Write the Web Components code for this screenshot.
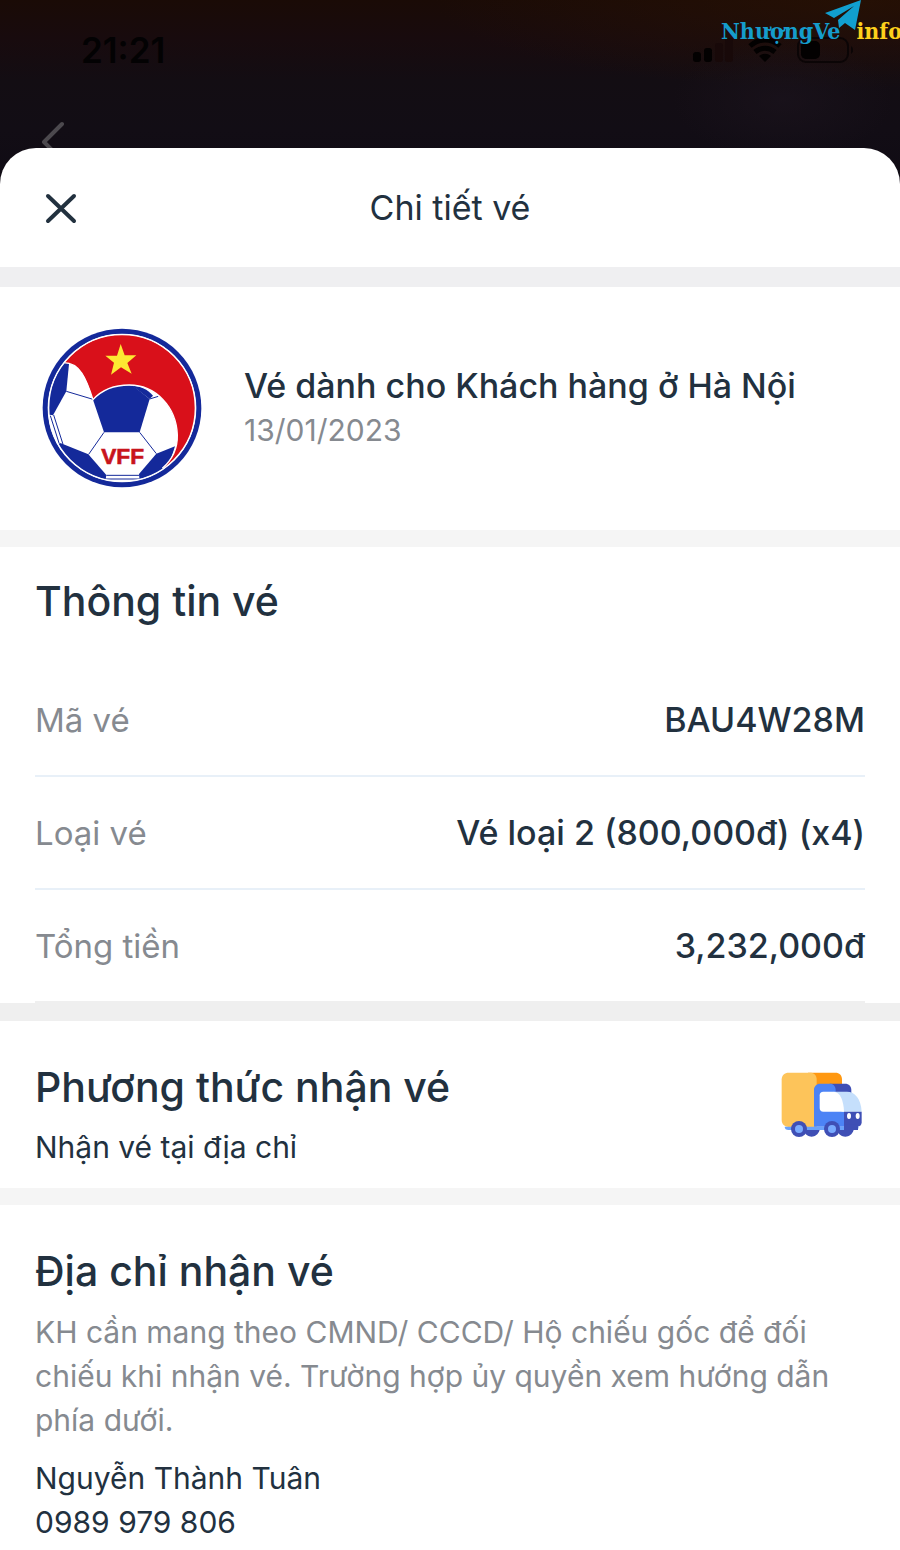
<!DOCTYPE html>
<html lang="vi">
<head>
<meta charset="utf-8">
<meta name="viewport" content="width=device-width, initial-scale=1">
<title>Chi tiết vé</title>
<style>
html {
  height: 100%;
}

body {
  margin: 0;
  height: 100%;
  font-family: Inter, Roboto, sans-serif;
  color: #22313f;
  background: #fff;
  --muted: #868a90;
  --gutter: 35px;
}
</style>
</head>
<body>
<ticket-screen>
  <status-bar slot="top" time="21:21"></status-bar>
  <site-brand slot="top"></site-brand>

  <sheet-header>Chi tiết vé</sheet-header>

  <event-card date="13/01/2023">Vé dành cho Khách hàng ở Hà Nội</event-card>

  <ticket-info heading="Thông tin vé"></ticket-info>

  <delivery-method heading="Phương thức nhận vé">Nhận vé tại địa chỉ</delivery-method>

  <delivery-address heading="Địa chỉ nhận vé">
    <span slot="note">KH cần mang theo CMND/ CCCD/ Hộ chiếu gốc để đối chiếu khi nhận vé. Trường hợp ủy quyền xem hướng dẫn phía dưới.</span>
    <span slot="name">Nguyễn Thành Tuân</span>
    <a slot="phone" href="tel:0989979806">0989 979 806</a>
  </delivery-address>
</ticket-screen>

<script>
const attach = (element, html) => {
  const template = document.createElement('template');
  template.innerHTML = html;
  element.attachShadow({ mode: "open" });
  element.shadowRoot.appendChild(template.content.cloneNode(true));
};


class TicketScreen extends HTMLElement {
  constructor() {
    super();

    attach(this, `
<style>
:host {
  display: flex;
  flex-direction: column;
  min-height: 100%;
  background:
    radial-gradient(ellipse 110px 60px at 87% 100px, rgba(28, 20, 30, 0.6), transparent),
    radial-gradient(ellipse 420px 90px at 95% 0, rgba(42, 18, 4, 0.7), transparent),
    linear-gradient(180deg, #1a0b06 0, #180b0e 40px, #130d13 80px, #120d15 130px, #0f0b14 200px);
}

.top {
  position: relative;
  height: 148px;
  overflow: hidden;
}

main {
  flex: 1;
  background: #fff;
  border-radius: 36px 36px 0 0;
}
</style>
<div class="top"><slot name="top"></slot></div>
<main><slot></slot></main>
`);
  }
}
window.customElements.define('ticket-screen', TicketScreen);


class StatusBar extends HTMLElement {
  constructor() {
    super();

    attach(this, `
<style>
:host {
  display: block;
}

.bar {
  display: flex;
  align-items: center;
  justify-content: space-between;
  padding: 30px 47px 0 81px;
  height: 40px;
}

time {
  font-size: 35px;
  line-height: 40px;
  font-weight: 600;
  color: #030203;
}

button {
  display: block;
  margin: 50px 0 0 36px;
  padding: 0;
  border: 0;
  background: none;
}

svg {
  display: block;
}
</style>
<div class="bar">
  <time></time>
  <svg width="160" height="30" viewBox="0 0 160 30" aria-hidden="true">
    <rect x="0" y="17" width="8" height="10" rx="3" fill="#030101"/>
    <rect x="11" y="13" width="8" height="14" rx="3" fill="#030101"/>
    <rect x="22" y="8" width="8" height="19" rx="3" fill="#180909"/>
    <rect x="32" y="3" width="8" height="24" rx="3" fill="#180909"/>
    <g fill="none" stroke="#030101" stroke-width="5">
      <path d="M57 11c9-8 21-8 30 0"/>
      <path d="M62 17c6-5 14-5 20 0"/>
    </g>
    <path d="M66 21c4-3 8-3 12 0l-6 6z" fill="#030101"/>
    <rect x="105" y="3" width="50" height="24" rx="8" fill="none" stroke="#0b0506" stroke-width="2"/>
    <rect x="108" y="6" width="19" height="18" rx="5" fill="#030101"/>
    <path d="M158 11c3 2 3 6 0 8z" fill="#0b0506"/>
  </svg>
</div>
<button type="button" aria-label="Quay lại">
  <svg width="36" height="36" viewBox="0 0 36 36" fill="none" stroke="#4c494e" stroke-width="4" stroke-linecap="round" stroke-linejoin="round">
    <path d="M26 4L8 22l18 18"/>
  </svg>
</button>
`);
  }

  connectedCallback() {
    this.shadowRoot.querySelector('time').textContent = this.getAttribute('time');
  }
}
window.customElements.define('status-bar', StatusBar);


class SiteBrand extends HTMLElement {
  constructor() {
    super();

    // Lies over the status bar and runs out at the right edge
    attach(this, `
<style>
:host {
  position: absolute;
  top: 0;
  right: -2px;
  display: flex;
  font-family: "DejaVu Serif Condensed", "DejaVu Serif", serif;
  font-weight: 700;
  font-size: 23px;
  line-height: 26px;
  padding-top: 18px;
}

.name {
  color: #159dcc;
  margin-right: 16px;
}

.tld {
  color: #fcd01c;
}

svg {
  position: absolute;
  top: 0;
  right: 41px;
}
</style>
<span class="name">NhượngVe</span>
<svg width="36" height="32" viewBox="0 0 36 32" aria-hidden="true">
  <path d="M36 0L0 13l9 5L29 6 13 20l1 8 6-5 10 7z" fill="#119fcf"/>
</svg>
<span class="tld">info</span>
`);
  }
}
window.customElements.define('site-brand', SiteBrand);


class SheetHeader extends HTMLElement {
  constructor() {
    super();

    attach(this, `
<style>
:host {
  display: grid;
  grid-template-columns: 50px 1fr 50px;
  align-items: center;
  height: 119px;
  padding: 0 36px;
  border-bottom: 20px solid #efeff1;
}

button {
  display: block;
  width: 50px;
  height: 50px;
  padding: 0;
  border: 0;
  background: none;
  color: inherit;
}

svg {
  display: block;
}

h1 {
  margin: 0;
  font-size: 34px;
  line-height: 44px;
  font-weight: 400;
  text-align: center;
}
</style>
<button type="button" aria-label="Đóng">
  <svg width="50" height="50" viewBox="0 0 50 50" fill="none" stroke="currentColor" stroke-width="4" stroke-linecap="round">
    <path d="M12 13l26 25M38 13L12 38"/>
  </svg>
</button>
<h1><slot></slot></h1>
`);
  }
}
window.customElements.define('sheet-header', SheetHeader);


class FederationLogo extends HTMLElement {
  constructor() {
    super();

    attach(this, `
<style>
:host {
  display: block;
}

svg {
  display: block;
  width: 160px;
  height: 160px;
}
</style>
<svg viewBox="37 39 480 480" role="img" aria-label="VFF">
  <defs>
    <clipPath id="disc"><circle cx="277" cy="279" r="220"/></clipPath>
  </defs>
  <circle cx="277" cy="279" r="238" fill="#14299a"/>
  <circle cx="277" cy="279" r="223" fill="#fff"/>
  <g clip-path="url(#disc)">
    <rect x="50" y="50" width="460" height="460" fill="#fff"/>
    <!-- ball panels -->
    <g fill="#14299a">
      <path d="M50 298V150l60-8 8 5-8 82-40 72z"/>
      <path d="M190 254c30-34 75-50 120-42l50 40-30 100H223z"/>
      <path d="M92 384l84 34 54 62-4 26-60-10-90-80z"/>
      <path d="M380 416l56-22-16 50-30 40-60 15-2-22z"/>
      <path d="M308 212c24 1 46 10 62 30l-10 10z"/>
    </g>
    <g fill="none" stroke="#14299a" stroke-width="3">
      <path d="M110 229l80 24M72 300l28 88M62 302l28 88M223 352l-46 66M330 352l50 64M360 252l26-8"/>
      <path d="M230 481h98M228 492h102"/>
    </g>
    <!-- flag -->
    <path d="M100 143L120 40h400v420H398c32-28 46-62 45-100-3-84-65-150-144-150-46 0-82 14-109 44-18-64-40-104-72-108z" fill="#d9101a"/>
    <path d="M100 143c50-2 70 48 90 111 27-30 63-44 109-44 79 0 141 66 144 150 1 38-13 72-45 100" fill="none" stroke="#fff" stroke-width="4"/>
  </g>
  <circle cx="277" cy="279" r="220" fill="none" stroke="#fff" stroke-width="4"/>
  <path d="M273 87l12 34h35l-27 23 13 32-32-19-30 22 9-36-26-21h35z" fill="#fde832"/>
  <text x="279" y="447" text-anchor="middle" font-family="Liberation Sans, sans-serif" font-weight="700" font-size="68" fill="#c8141c" stroke="#c8141c" stroke-width="2">VFF</text>
</svg>
`);
  }
}
window.customElements.define('federation-logo', FederationLogo);


class EventCard extends HTMLElement {
  constructor() {
    super();

    attach(this, `
<style>
:host {
  display: flex;
  align-items: center;
  gap: 42px;
  padding: 41px 42px 42px;
  border-bottom: 17px solid #f5f5f5;
}

h2 {
  margin: 0;
  font-size: 34px;
  line-height: 44px;
  font-weight: 500;
}

time {
  display: block;
  font-size: 30px;
  line-height: 44px;
  color: var(--muted);
}
</style>
<federation-logo></federation-logo>
<div>
  <h2><slot></slot></h2>
  <time></time>
</div>
`);
  }

  connectedCallback() {
    this.shadowRoot.querySelector('time').textContent = this.getAttribute('date');
  }
}
window.customElements.define('event-card', EventCard);


class InfoRow extends HTMLElement {
  constructor() {
    super();

    attach(this, `
<style>
:host {
  display: flex;
  align-items: center;
  justify-content: space-between;
  height: 111px;
  border-bottom: 2px solid #e8f0f8;
}

:host(:last-of-type) {
  border-color: #efefef;
}

span {
  font-size: 33px;
  color: var(--muted);
}

strong {
  font-size: 34px;
  font-weight: 500;
}
</style>
<span></span>
<strong><slot></slot></strong>
`);
  }

  connectedCallback() {
    this.shadowRoot.querySelector('span').textContent = this.getAttribute('label');
  }
}
window.customElements.define('info-row', InfoRow);


class TicketInfo extends HTMLElement {
  constructor() {
    super();

    attach(this, `
<style>
:host {
  display: block;
  padding: 28px var(--gutter) 0;
  border-bottom: 18px solid #efefef;
}

h2 {
  margin: 0 0 37px;
  font-size: 41px;
  line-height: 52px;
  font-weight: 500;
}
</style>
<h2></h2>
<info-row label="Mã vé">BAU4W28M</info-row>
<info-row label="Loại vé">Vé loại 2 (800,000đ) (x4)</info-row>
<info-row label="Tổng tiền">3,232,000đ</info-row>
`);
  }

  connectedCallback() {
    this.shadowRoot.querySelector('h2').textContent = this.getAttribute('heading');
  }
}
window.customElements.define('ticket-info', TicketInfo);


class DeliveryMethod extends HTMLElement {
  constructor() {
    super();

    attach(this, `
<style>
:host {
  display: flex;
  align-items: center;
  justify-content: space-between;
  padding: 40px var(--gutter) 19px;
  border-bottom: 17px solid #f5f5f5;
}

h2 {
  margin: 0 0 12px;
  font-size: 41px;
  line-height: 52px;
  font-weight: 500;
}

p {
  margin: 0;
  font-size: 30px;
  line-height: 44px;
}

svg {
  display: block;
  width: 84px;
  height: 68px;
  margin-bottom: 20px;
}
</style>
<div>
  <h2></h2>
  <p><slot></slot></p>
</div>
<svg viewBox="49 49 252 204" aria-hidden="true">
  <path d="M130 54h82c12 0 20 8 20 20v20h-90z" fill="#ff9811"/>
  <path d="M72 54h64c12 0 20 8 20 20v143H72c-12 0-21-9-21-21V74c0-12 9-20 21-20z" fill="#fdc45a"/>
  <path d="M195 87h46c12 0 19 8 19 19v10h-62z" fill="#3f4fb5"/>
  <path d="M166 87h30c10 0 17 8 17 18v7l25 60v44h-90V105c0-10 8-18 18-18z" fill="#4c83f5"/>
  <path d="M207 111h40c24 0 42 22 44 60h-60z" fill="#c5dffc"/>
  <path d="M176 111h31c20 0 30 28 31 60h-62c-7 0-11-4-11-11v-38c0-7 4-11 11-11z" fill="#fff"/>
  <path d="M238 171h53v32c0 8-5 13-13 13h-40z" fill="#3f4fb5"/>
  <path d="M66 216h216c0 6-3 10-10 10H72c-8 0-12-4-12-10z" fill="#6aa2fb"/>
  <path d="M238 209h42v17h-42z" fill="#3f4fb5"/>
  <path d="M116 226h49c-5 14-14 20-24 20s-20-6-25-20zM217 226h50c-5 14-14 20-25 20s-20-6-25-20z" fill="#3f4fb5"/>
  <circle cx="103" cy="223" r="24" fill="#3f4fb5"/>
  <circle cx="202" cy="223" r="24" fill="#3f4fb5"/>
  <circle cx="103" cy="223" r="12" fill="#79abff"/>
  <circle cx="202" cy="223" r="12" fill="#79abff"/>
  <ellipse cx="253" cy="184" rx="6" ry="9" fill="#fff"/>
  <ellipse cx="279" cy="184" rx="6" ry="9" fill="#fff"/>
</svg>
`);
  }

  connectedCallback() {
    this.shadowRoot.querySelector('h2').textContent = this.getAttribute('heading');
  }
}
window.customElements.define('delivery-method', DeliveryMethod);


class DeliveryAddress extends HTMLElement {
  constructor() {
    super();

    attach(this, `
<style>
:host {
  display: block;
  padding: 40px var(--gutter) 0;
  font-size: 30px;
  line-height: 44px;
}

h2 {
  margin: 0 0 13px;
  font-size: 41px;
  line-height: 52px;
  font-weight: 500;
}

p {
  margin: 0;
}

.note {
  margin-bottom: 14px;
  color: var(--muted);
}

::slotted(a) {
  color: inherit;
  text-decoration: none;
}
</style>
<h2></h2>
<p class="note"><slot name="note"></slot></p>
<p><slot name="name"></slot></p>
<p><slot name="phone"></slot></p>
`);
  }

  connectedCallback() {
    this.shadowRoot.querySelector('h2').textContent = this.getAttribute('heading');
  }
}
window.customElements.define('delivery-address', DeliveryAddress);
</script>
</body>
</html>
